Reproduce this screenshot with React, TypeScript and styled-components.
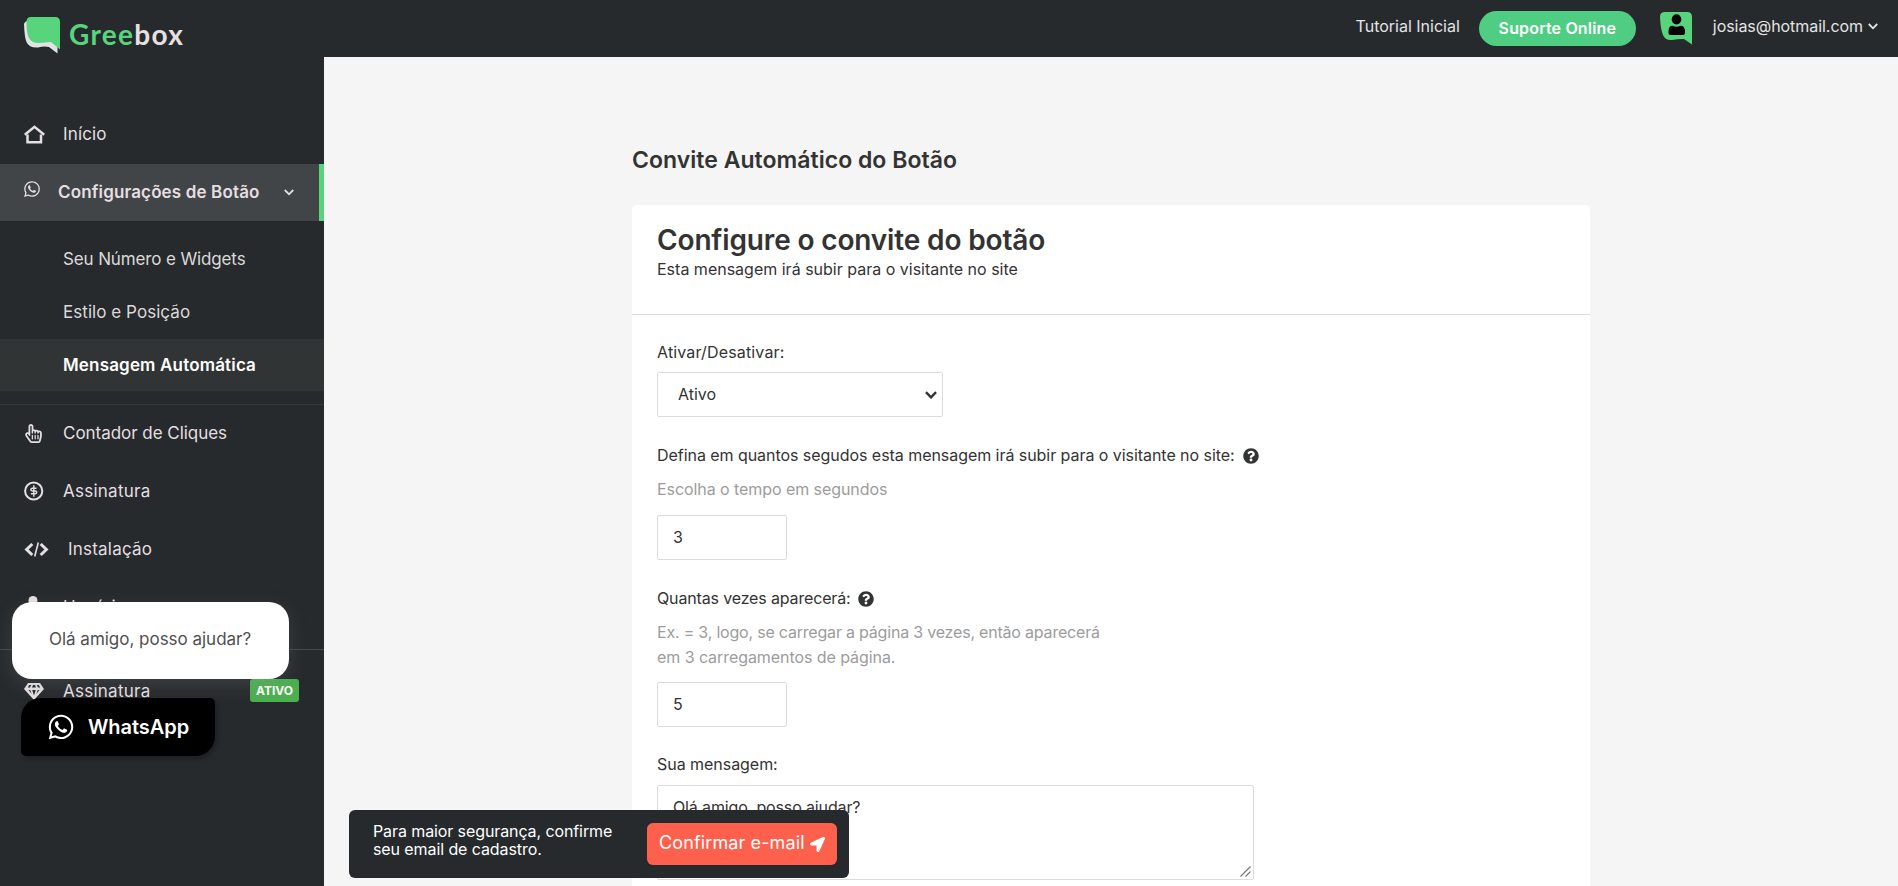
import React from "react";
import styled, { createGlobalStyle } from "styled-components";
import { FaWhatsapp, FaRegHandPointer, FaQuestionCircle, FaLocationArrow } from "react-icons/fa";

const GlobalStyle = createGlobalStyle`
  * { box-sizing: border-box; }
  body {
    margin: 0;
    font-family: Inter, Roboto, "Liberation Sans", sans-serif;
    color: #333;
    background: #f5f5f5;
    overflow: hidden;
  }
`;

const Page = styled.div`
  display: grid;
  grid-template-columns: 324px 1fr;
  height: 886px;
  overflow: hidden;
`;

const Tracked = styled.span<{ $ls?: number }>`
  letter-spacing: ${(p) => p.$ls ?? 0}px;
  white-space: nowrap;
`;

/* Sidebar */
const Sidebar = styled.aside`
  display: flex;
  flex-direction: column;
  background: #262a2d;
  border-bottom: 1px solid #2c2427;
`;

const Brand = styled.div`
  display: flex;
  align-items: flex-start;
  gap: 8px;
  height: 106px;
  flex: none;
  padding: 16px 0 0 23px;
`;

const BrandName = styled.div`
  font: 700 28px/36px Lato, sans-serif;
  letter-spacing: 1.3px;
  color: #e6e0e1;
  em {
    font-style: normal;
    color: #58d57c;
  }
`;

const NavItem = styled.a<{ $active?: boolean; $textX?: number }>`
  display: grid;
  grid-template-columns: ${(p) => (p.$textX ?? 63) - 24}px 1fr auto;
  align-items: center;
  flex: none;
  height: 57px;
  margin-bottom: ${(p) => (p.$active ? 0 : 1)}px;
  padding: 0 25px 1px 24px;
  font-size: 17px;
  line-height: 22px;
  font-weight: ${(p) => (p.$active ? 600 : 400)};
  color: #e4dfe0;
  background: ${(p) => (p.$active ? "#424547" : "transparent")};
  border-right: ${(p) => (p.$active ? "5px solid #58d57c" : "none")};
  svg { display: block; }
`;

const RaisedIcon = styled.span`
  margin: 0 0 7px -1px;
`;

const Submenu = styled.div`
  display: flex;
  flex-direction: column;
  gap: 1px;
  padding: 12px 0 13px;
`;

const SubItem = styled.a<{ $active?: boolean }>`
  height: 52px;
  padding-left: 63px;
  font-size: 17px;
  line-height: 52px;
  font-weight: ${(p) => (p.$active ? 600 : 400)};
  color: ${(p) => (p.$active ? "#fff" : "#dcd9d9")};
  background: ${(p) => (p.$active ? "#303435" : "transparent")};
`;

const Divider = styled.hr<{ $gap?: boolean }>`
  width: 100%;
  height: 1px;
  flex: none;
  border: 0;
  margin: ${(p) => (p.$gap ? "12px 0 13px" : "0")};
  background: ${(p) => (p.$gap ? "#44484a" : "#34383a")};
`;

const Badge = styled.span`
  width: 49px;
  height: 23px;
  margin-bottom: 1px;
  border-radius: 3px;
  background: #4caf50;
  color: #fff;
  text-align: center;
  font-size: 12px;
  font-weight: 700;
  line-height: 24px;
`;

/* Top bar */
const Main = styled.main`
  display: flex;
  flex-direction: column;
  min-width: 0;
`;

const TopBar = styled.header`
  display: flex;
  justify-content: flex-end;
  align-items: flex-start;
  flex: none;
  height: 57px;
  padding: 11px 20px 0 0;
  background: #262a2d;
  color: #e4e4e4;
  font-size: 16px;
  line-height: 30px;
`;

const SupportButton = styled.button`
  width: 157px;
  height: 35px;
  margin: 0 24px 0 19px;
  padding: 0;
  border: 0;
  border-radius: 18px;
  background: #4fcd82;
  color: #fff;
  font: 600 16px/35px Inter, sans-serif;
`;

const Account = styled.div`
  display: flex;
  align-items: center;
  gap: 5px;
  margin-left: 21px;
`;

/* Form */
const Content = styled.section`
  width: 958px;
  margin: 88px 0 0 308px;
`;

const PageTitle = styled.h1`
  margin: 0 0 30px;
  font-size: 23px;
  line-height: 30px;
  font-weight: 600;
`;

const Card = styled.div`
  height: 760px;
  border-radius: 5px;
  background: #fff;
`;

const CardHead = styled.div`
  height: 110px;
  padding: 18px 25px 0;
  border-bottom: 1px solid #dcdcdc;
`;

const CardTitle = styled.h2`
  margin: 0;
  font-size: 28px;
  line-height: 34px;
  font-weight: 600;
`;

const CardSubtitle = styled.p`
  margin: 0;
  font-size: 16px;
  line-height: 24px;
`;

const CardBody = styled.div`
  display: flex;
  flex-direction: column;
  padding: 25px 25px 0;
`;

const Field = styled.div<{ $before?: number }>`
  display: flex;
  flex-direction: column;
  margin-top: ${(p) => p.$before ?? 0}px;
`;

const Label = styled.label<{ $gap?: number }>`
  display: flex;
  align-items: center;
  gap: ${(p) => p.$gap ?? 9}px;
  height: 24px;
  font-size: 16px;
  line-height: 24px;
  svg { flex: none; margin-top: 1px; }
`;

const Hint = styled.p<{ $after: number }>`
  margin: 10px 0 ${(p) => p.$after}px;
  font-size: 16px;
  line-height: 25px;
  color: #9c9c9c;
  span { display: block; }
`;

const SelectBox = styled.div`
  display: flex;
  align-items: center;
  justify-content: space-between;
  width: 286px;
  height: 45px;
  margin-top: 8px;
  padding: 0 5px 1px 20px;
  border: 1px solid #dcdcdc;
  border-radius: 2px;
  font-size: 16px;
  svg { margin-top: 2px; }
`;

const NumberInput = styled.input`
  width: 130px;
  height: 45px;
  padding: 0 15px 1px;
  border: 1px solid #dcdcdc;
  border-radius: 2px;
  font: 400 16px Inter, sans-serif;
  color: #333;
  background: #fff;
`;

const MessageWrap = styled.div`
  position: relative;
  width: 597px;
  height: 95px;
  margin-top: 9px;
`;

const MessageInput = styled.textarea`
  display: block;
  width: 100%;
  height: 100%;
  padding: 9px 15px;
  border: 1px solid #dcdcdc;
  border-radius: 2px;
  resize: none;
  font: 400 16px/24px Inter, sans-serif;
  letter-spacing: -0.14px;
  color: #333;
`;

const Grip = styled.svg`
  position: absolute;
  right: 3px;
  bottom: 3px;
`;

/* Floating pieces */
const Bubble = styled.div`
  position: absolute;
  left: 12px;
  top: 602px;
  width: 277px;
  height: 77px;
  padding-left: 37px;
  border-radius: 20px;
  background: #fff;
  box-shadow: 0 6px 20px rgba(150, 150, 150, 0.2);
  color: #505050;
  font-size: 17px;
  line-height: 74px;
`;

const WhatsButton = styled.button`
  position: absolute;
  left: 21px;
  top: 698px;
  display: flex;
  align-items: center;
  gap: 13px;
  width: 194px;
  height: 58px;
  padding: 0 0 0 26px;
  border: 0;
  border-radius: 20px 5px 20px 5px;
  background: #000;
  box-shadow: 2px 3px 5px rgba(0, 0, 0, 0.25);
  color: #fff;
  font: 600 20px/58px Inter, sans-serif;
`;

const Toast = styled.div`
  position: absolute;
  left: 349px;
  top: 810px;
  display: flex;
  justify-content: space-between;
  width: 500px;
  height: 68px;
  padding: 13px 12px 0 24px;
  border-radius: 6px;
  background: #262a2d;
  color: #fff;
`;

const ToastText = styled.p`
  display: flex;
  flex-direction: column;
  margin: -1px 0 0;
  font-size: 16px;
  line-height: 18px;
`;

const ConfirmButton = styled.button`
  display: flex;
  align-items: center;
  gap: 5px;
  width: 190px;
  height: 42px;
  padding: 0 0 3px 12px;
  border: 0;
  border-radius: 6px;
  background: #fd614d;
  color: #fff;
  font: 400 18px/39px Inter, sans-serif;
  svg { margin-top: 3px; }
`;

const Chevron = ({ w = 10, sw = 1.8 }: { w?: number; sw?: number }) => (
  <svg width={w} height={w * 0.7} viewBox="0 0 10 7" fill="none" stroke="currentColor" strokeWidth={sw}>
    <path d="M.8 1 5 5.3 9.2 1" />
  </svg>
);

const Logo = () => (
  <svg width="38" height="38" viewBox="23 16 38 38">
    <path d="M24 24Q25 21 28 21L52 40 57.500 46V53.500L49 47Q44 46 38 47.500Q29 48 26.500 42Q24.500 38 24 24Z" fill="#dfe3e3" />
    <path d="M31 17H55Q60 17 60 22V49.500L51 42Q45 42.500 39 43Q31 43 28.500 37Q26.500 32 26.500 22Q26.500 17 31 17Z" fill="#58d57c" />
  </svg>
);

const AvatarIcon = () => (
  <svg width="32" height="34" viewBox="0 0 32 34">
    <path d="M5 1H27Q32 1 32 6V33.500L24 28Q17 28 12 29Q5 29.500 3 24Q.5 18 0 6Q0 1 5 1Z" fill="#58d57c" />
    <ellipse cx="16.500" cy="8.300" rx="4.800" ry="5.100" fill="#000" />
    <path d="M8.500 20.500Q8.500 14.800 12.500 14.800Q16.500 16.600 20.500 14.800Q25 14.800 25 20.500V22Q25 24 23 24H10.500Q8.500 24 8.500 22Z" fill="#000" />
  </svg>
);

const HomeIcon = () => (
  <svg width="21" height="19" viewBox="0 0 21 19" fill="none" stroke="currentColor" strokeWidth="2.500">
    <path d="M.8 9.700 10.500 1.800 20.200 9.700" />
    <path d="M3.500 9.500V17.200H17V9.500" />
  </svg>
);

const DollarIcon = () => (
  <svg width="20" height="20" viewBox="0 0 20 20" fill="none" stroke="currentColor">
    <circle cx="9.700" cy="10" r="8.600" strokeWidth="2" />
    <path d="M12.500 7.300H8.300Q6.900 7.300 6.900 8.600Q6.900 9.900 8.300 9.900H11.200Q12.700 9.900 12.700 11.300Q12.700 12.700 11.200 12.700H6.900" strokeWidth="1.500" />
    <path d="M9.800 4.300V15.700" strokeWidth="1.400" />
  </svg>
);

const CodeIcon = () => (
  <svg width="25" height="15" viewBox="0 0 25 15" fill="none" stroke="currentColor">
    <path d="M8.300 2 2.600 7.500 8.300 13M16.700 2 22.400 7.500 16.700 13" strokeWidth="3" />
    <path d="M14.300.5 10.700 14.500" strokeWidth="1.600" />
  </svg>
);

const UserIcon = () => (
  <svg width="20" height="22" viewBox="0 0 20 22" fill="currentColor">
    <circle cx="9" cy="4.500" r="4.500" />
    <path d="M1 20Q1 11 9 11Q17 11 17 20Z" />
  </svg>
);

const DiamondIcon = () => (
  <svg width="20" height="17" viewBox="0 0 20 17">
    <path d="M4 0H16L20 6 10 17 0 6Z" fill="currentColor" />
    <path d="M5.200 2 3.800 4.500H6L7.200 2ZM9 2 8 4.500H12L11 2ZM12.800 2 14 4.500H16.200L14.800 2ZM4.500 7H6.200L7.800 11ZM15.500 7H13.800L12.200 11ZM8.200 7H11.800L10 12.500Z" fill="#262a2d" />
  </svg>
);

export default function App() {
  return (
    <>
      <GlobalStyle />
      <Page>
        <Sidebar>
          <Brand>
            <Logo />
            <BrandName><em>Gree</em>box</BrandName>
          </Brand>
          <NavItem><HomeIcon /><Tracked $ls={0.15}>Início</Tracked></NavItem>
          <NavItem $active $textX={58}>
            <RaisedIcon><FaWhatsapp size={18} /></RaisedIcon>
            <Tracked $ls={0.14}>Configurações de Botão</Tracked>
            <Chevron />
          </NavItem>
          <Submenu>
            <SubItem><Tracked $ls={-0.13}>Seu Número e Widgets</Tracked></SubItem>
            <SubItem><Tracked $ls={0.05}>Estilo e Posição</Tracked></SubItem>
            <SubItem $active><Tracked $ls={0.17}>Mensagem Automática</Tracked></SubItem>
          </Submenu>
          <Divider />
          <NavItem><FaRegHandPointer size={19} /><Tracked $ls={-0.04}>Contador de Cliques</Tracked></NavItem>
          <NavItem><DollarIcon /><Tracked $ls={0.25}>Assinatura</Tracked></NavItem>
          <NavItem $textX={68}><CodeIcon /><Tracked $ls={0.22}>Instalação</Tracked></NavItem>
          <NavItem><UserIcon /><Tracked $ls={0.1}>Usuários</Tracked></NavItem>
          <Divider $gap />
          <NavItem><DiamondIcon /><Tracked $ls={0.25}>Assinatura</Tracked><Badge>ATIVO</Badge></NavItem>
        </Sidebar>
        <Main>
          <TopBar>
            <Tracked>Tutorial Inicial</Tracked>
            <SupportButton><Tracked $ls={0.16}>Suporte Online</Tracked></SupportButton>
            <AvatarIcon />
            <Account><Tracked $ls={-0.05}>josias@hotmail.com</Tracked><Chevron /></Account>
          </TopBar>
          <Content>
            <PageTitle><Tracked $ls={0.03}>Convite Automático do Botão</Tracked></PageTitle>
            <Card>
              <CardHead>
                <CardTitle><Tracked $ls={-0.15}>Configure o convite do botão</Tracked></CardTitle>
                <CardSubtitle><Tracked>Esta mensagem irá subir para o visitante no site</Tracked></CardSubtitle>
              </CardHead>
              <CardBody>
                <Field>
                  <Label><Tracked $ls={0.15}>Ativar/Desativar:</Tracked></Label>
                  <SelectBox><Tracked>Ativo</Tracked><Chevron w={12} sw={2} /></SelectBox>
                </Field>
                <Field $before={26}>
                  <Label $gap={8}>
                    <Tracked $ls={-0.05}>Defina em quantos segudos esta mensagem irá subir para o visitante no site:</Tracked>
                    <FaQuestionCircle size={16} />
                  </Label>
                  <Hint $after={13}><Tracked $ls={-0.07}>Escolha o tempo em segundos</Tracked></Hint>
                  <NumberInput defaultValue="3" />
                </Field>
                <Field $before={26}>
                  <Label $gap={7}><Tracked $ls={-0.15}>Quantas vezes aparecerá:</Tracked><FaQuestionCircle size={16} /></Label>
                  <Hint $after={12}>
                    <Tracked $ls={-0.2}>Ex. = 3, logo, se carregar a página 3 vezes, então aparecerá</Tracked>
                    <Tracked $ls={-0.07}>em 3 carregamentos de página.</Tracked>
                  </Hint>
                  <NumberInput defaultValue="5" />
                </Field>
                <Field $before={25}>
                  <Label><Tracked $ls={-0.04}>Sua mensagem:</Tracked></Label>
                  <MessageWrap>
                    <MessageInput defaultValue="Olá amigo, posso ajudar?" />
                    <Grip width="11" height="11" viewBox="0 0 11 11" stroke="#777" strokeWidth="1.200">
                      <path d="M.5 10.500 10.500.5M5.500 10.500 10.500 5.500" />
                    </Grip>
                  </MessageWrap>
                </Field>
              </CardBody>
            </Card>
          </Content>
        </Main>
      </Page>
      <Bubble><Tracked $ls={-0.02}>Olá amigo, posso ajudar?</Tracked></Bubble>
      <WhatsButton><FaWhatsapp size={28} /><Tracked $ls={-0.05}>WhatsApp</Tracked></WhatsButton>
      <Toast>
        <ToastText>
          <Tracked $ls={-0.1}>Para maior segurança, confirme</Tracked>
          <Tracked $ls={-0.09}>seu email de cadastro.</Tracked>
        </ToastText>
        <ConfirmButton><Tracked $ls={0.12}>Confirmar e-mail</Tracked><FaLocationArrow size={15} /></ConfirmButton>
      </Toast>
    </>
  );
}
